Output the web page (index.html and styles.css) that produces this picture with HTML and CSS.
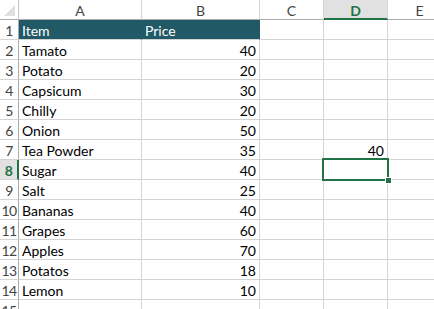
FILE: index.html
```html
<!DOCTYPE html>
<html lang="en">
<head>
  <meta charset="UTF-8" />
  <title>Sheet</title>
  <link rel="stylesheet" href="styles.css">
</head>
<body>

<div class="sheet">
  <div class="corner"><span class="tri"></span></div>
  <div class="col-head">A</div>
  <div class="col-head">B</div>
  <div class="col-head">C</div>
  <div class="col-head sel">D</div>
  <div class="col-head">E</div>

  <div class="row-head">1</div>
  <div class="cell th">Item</div>
  <div class="cell th">Price</div>
  <div class="cell"></div><div class="cell"></div><div class="cell"></div>

  <div class="row-head">2</div>
  <div class="cell">Tamato</div><div class="cell num">40</div>
  <div class="cell"></div><div class="cell"></div><div class="cell"></div>

  <div class="row-head">3</div>
  <div class="cell">Potato</div><div class="cell num">20</div>
  <div class="cell"></div><div class="cell"></div><div class="cell"></div>

  <div class="row-head">4</div>
  <div class="cell">Capsicum</div><div class="cell num">30</div>
  <div class="cell"></div><div class="cell"></div><div class="cell"></div>

  <div class="row-head">5</div>
  <div class="cell">Chilly</div><div class="cell num">20</div>
  <div class="cell"></div><div class="cell"></div><div class="cell"></div>

  <div class="row-head">6</div>
  <div class="cell">Onion</div><div class="cell num">50</div>
  <div class="cell"></div><div class="cell"></div><div class="cell"></div>

  <div class="row-head">7</div>
  <div class="cell">Tea Powder</div><div class="cell num">35</div>
  <div class="cell"></div><div class="cell num">40</div><div class="cell"></div>

  <div class="row-head sel">8</div>
  <div class="cell">Sugar</div><div class="cell num">40</div>
  <div class="cell"></div>
  <div class="cell active"><span class="handle"></span></div>
  <div class="cell"></div>

  <div class="row-head">9</div>
  <div class="cell">Salt</div><div class="cell num">25</div>
  <div class="cell"></div><div class="cell"></div><div class="cell"></div>

  <div class="row-head">10</div>
  <div class="cell">Bananas</div><div class="cell num">40</div>
  <div class="cell"></div><div class="cell"></div><div class="cell"></div>

  <div class="row-head">11</div>
  <div class="cell">Grapes</div><div class="cell num">60</div>
  <div class="cell"></div><div class="cell"></div><div class="cell"></div>

  <div class="row-head">12</div>
  <div class="cell">Apples</div><div class="cell num">70</div>
  <div class="cell"></div><div class="cell"></div><div class="cell"></div>

  <div class="row-head">13</div>
  <div class="cell">Potatos</div><div class="cell num">18</div>
  <div class="cell"></div><div class="cell"></div><div class="cell"></div>

  <div class="row-head">14</div>
  <div class="cell">Lemon</div><div class="cell num">10</div>
  <div class="cell"></div><div class="cell"></div><div class="cell"></div>

  <div class="row-head">15</div>
  <div class="cell"></div><div class="cell"></div>
  <div class="cell"></div><div class="cell"></div><div class="cell"></div>
</div>

</body>
</html>
```

FILE: styles.css
```css
* {
  box-sizing: border-box;
}

body {
  margin: 0;
  background: #fff;
  overflow: hidden;
  font-family: Lato, 'Liberation Sans', sans-serif;
  font-size: 14px;
  color: #000;
}

.sheet {
  display: grid;
  grid-template-columns: 19px 123px 118px 64px 64px 64px;
  grid-auto-rows: 20px;
}

.sheet > div {
  border-right: 1px solid #d4d4d4;
  border-bottom: 1px solid #d4d4d4;
  line-height: 21px;
  white-space: nowrap;
  overflow: hidden;
}

.corner {
  position: relative;
  border-right-color: #c6c6c6 !important;
  border-bottom-color: #ababab !important;
}

.tri {
  position: absolute;
  right: 3px;
  bottom: 3px;
  width: 0;
  height: 0;
  border-left: 11px solid transparent;
  border-bottom: 11px solid #dfdfdf;
}

.col-head {
  text-align: center;
  color: #444;
  border-bottom-color: #ababab !important;
}

.col-head.sel {
  background: #e1e1e1;
  color: #217346;
  font-weight: bold;
  border-bottom: 2px solid #217346 !important;
}

.row-head {
  text-align: center;
  color: #444;
  letter-spacing: -0.5px;
  border-right-color: #ababab !important;
}

.row-head.sel {
  background: #e1e1e1;
  color: #217346;
  font-weight: bold;
  border-right: 2px solid #217346 !important;
}

.cell {
  padding: 0 3px;
}

.cell.num {
  text-align: right;
}

.cell.th {
  background: #215967;
  color: #fff;
  border-right-color: #215967 !important;
}

.cell.active {
  position: relative;
  overflow: visible !important;
}

.cell.active::before {
  content: "";
  position: absolute;
  left: -2px;
  top: -2px;
  right: -2px;
  bottom: -2px;
  border: 2px solid #217346;
}

.handle {
  position: absolute;
  right: -5px;
  bottom: -5px;
  width: 7px;
  height: 7px;
  background: #217346;
  border: 1px solid #fff;
  z-index: 2;
}
```
